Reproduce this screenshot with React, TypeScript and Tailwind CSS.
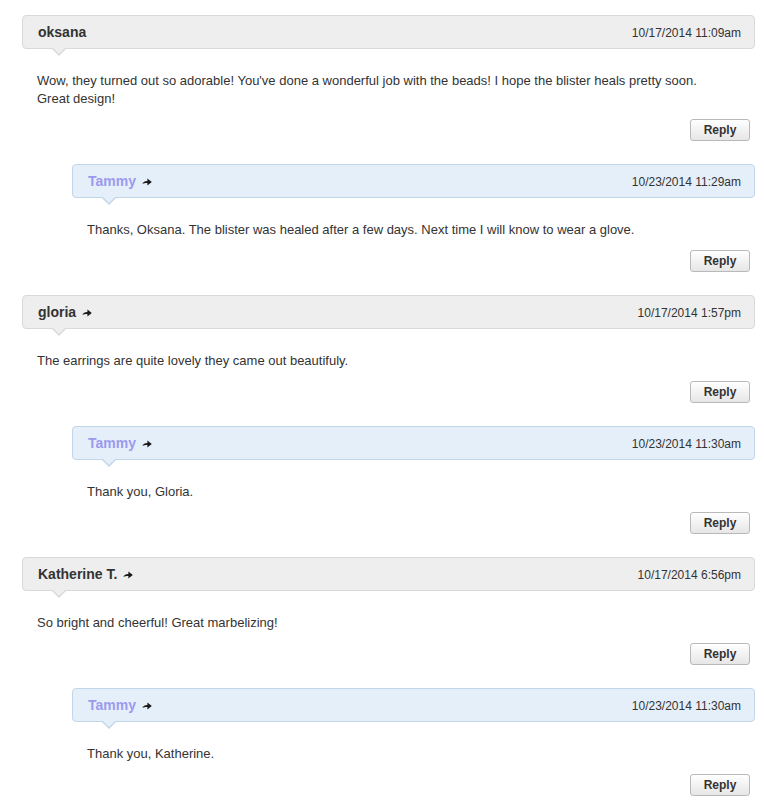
import React from "react";

type Comment = {
  name: string;
  link?: boolean;
  date: string;
  body: string;
  reply?: boolean;
};

const comments: Comment[] = [
  {
    name: "oksana",
    date: "10/17/2014 11:09am",
    body: "Wow, they turned out so adorable! You've done a wonderful job with the beads! I hope the blister heals pretty soon. Great design!",
  },
  {
    name: "Tammy",
    link: true,
    reply: true,
    date: "10/23/2014 11:29am",
    body: "Thanks, Oksana. The blister was healed after a few days. Next time I will know to wear a glove.",
  },
  {
    name: "gloria",
    link: true,
    date: "10/17/2014 1:57pm",
    body: "The earrings are quite lovely they came out beautifuly.",
  },
  {
    name: "Tammy",
    link: true,
    reply: true,
    date: "10/23/2014 11:30am",
    body: "Thank you, Gloria.",
  },
  {
    name: "Katherine T.",
    link: true,
    date: "10/17/2014 6:56pm",
    body: "So bright and cheerful! Great marbelizing!",
  },
  {
    name: "Tammy",
    link: true,
    reply: true,
    date: "10/23/2014 11:30am",
    body: "Thank you, Katherine.",
  },
];

// little "share" arrow next to linked names
function LinkArrow() {
  return (
    <svg width="10" height="8" viewBox="0 0 10 8" className="ml-[6px] mt-[1px]">
      <path d="M0.3 6 C1 4.2 2.8 3 5.4 3 L5.4 0.6 L9.8 4 L5.4 7.4 L5.4 5 C3.2 5 1.6 5.3 0.3 6 Z" fill="#1a1a1a" />
    </svg>
  );
}

function CommentItem({ c }: { c: Comment }) {
  const headBg = c.reply ? "bg-[#e5eff9]" : "bg-[#eeeeee]";
  const headBorder = c.reply ? "border-[#c3d6e8]" : "border-[#d9d9d9]";
  return (
    <div className={c.reply ? "ml-[50px]" : ""}>
      <div className="relative">
        <div
          className={`flex h-[34px] items-center justify-between rounded-[4px] border ${headBorder} ${headBg} pl-[15px] pr-[13px] pt-[1px]`}
        >
          <div className="flex items-center">
            <span
              className={`text-[14px] font-bold ${c.reply ? "text-[#9a9af0]" : "text-[#333333]"}`}
            >
              {c.name}
            </span>
            {c.link && <LinkArrow />}
          </div>
          <span className="text-[12px] text-[#333333]">{c.date}</span>
        </div>
        <div
          className={`absolute left-[29px] top-[33px] h-0 w-0 border-x-[8px] border-t-[8px] border-x-transparent ${c.reply ? "border-t-[#c3d6e8]" : "border-t-[#d9d9d9]"}`}
        />
        <div
          className={`absolute left-[30px] top-[32px] h-0 w-0 border-x-[7px] border-t-[7px] border-x-transparent ${c.reply ? "border-t-[#e5eff9]" : "border-t-[#eeeeee]"}`}
        />
      </div>
      <p className="mt-[23px] pl-[15px] pr-[40px] text-[13px] leading-[18px] text-[#333333]">
        {c.body}
      </p>
      <div className="mt-[11px] flex justify-end pr-[5px]">
        <button className="h-[22px] w-[60px] rounded-[3px] border border-[#b9b9b9] bg-gradient-to-b from-white to-[#e6e6e6] text-[12px] font-bold text-[#333333] shadow-[inset_0_1px_0_#fff]">
          Reply
        </button>
      </div>
    </div>
  );
}

export default function App() {
  return (
    <div
      className="min-h-screen w-[764px] bg-white pl-[22px] pr-[9px] pt-[15px]"
      style={{ fontFamily: '"Liberation Sans", Arial, sans-serif' }}
    >
      <div className="flex flex-col gap-[23px]">
        {comments.map((c, i) => (
          <CommentItem key={i} c={c} />
        ))}
      </div>
    </div>
  );
}
